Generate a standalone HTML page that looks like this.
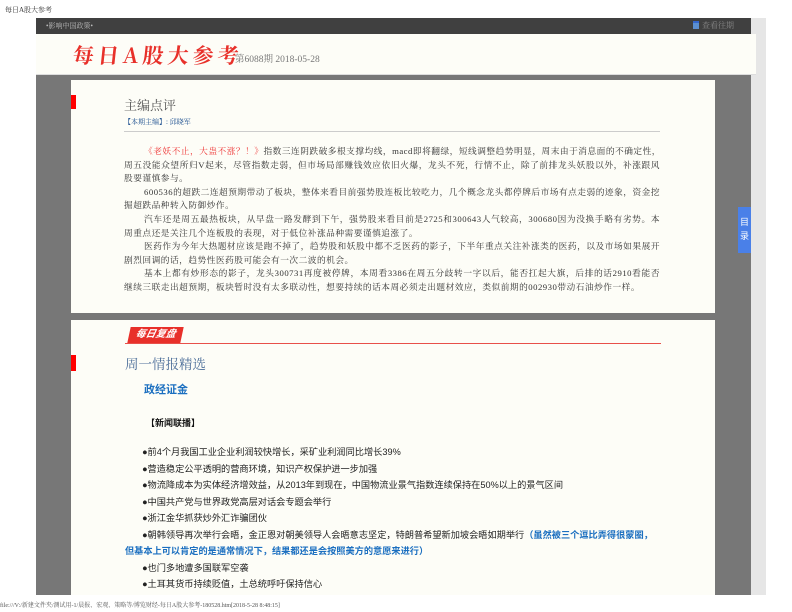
<!DOCTYPE html>
<html><head><meta charset="utf-8"><style>
*{margin:0;padding:0;box-sizing:border-box}
body{width:792px;height:612px;background:#fff;position:relative;overflow:hidden;font-family:"Liberation Serif","Noto Serif CJK SC",serif;}
.abs{position:absolute}
.sans{font-family:"Liberation Sans","Noto Sans CJK SC",sans-serif}
.l{font-size:8.7px;line-height:13.6px;height:13.6px;color:#333;white-space:nowrap;text-align:justify;text-align-last:justify;letter-spacing:0.5px}
.e{text-align-last:left}
.i{padding-left:20px}
.li{font-size:9.2px;color:#222;height:16.5px;line-height:16.5px;padding-left:12px;white-space:nowrap}
</style></head><body>
<div class="abs" style="left:5px;top:5px;font-size:7px;color:#333">每日A股大参考</div>
<div class="abs" style="left:751px;top:18px;width:15px;height:577px;background:#e6e6e6"></div>
<div class="abs" style="left:36px;top:18px;width:715px;height:16px;background:#404040"></div>
<div class="abs" style="left:46px;top:21px;font-size:7px;color:#bbb">•影响中国政策•</div>
<div class="abs" style="left:693px;top:21px;width:6px;height:8px;background:#5b8fd0;border-top:2px solid #36c"></div>
<div class="abs" style="left:702px;top:20px;font-size:8px;color:#888">查看往期</div>
<div class="abs" style="left:36px;top:34px;width:720px;height:41px;background:#fdfdf7;border-bottom:1px solid #ddd"></div>
<div class="abs" style="left:73px;top:40px;font-size:21px;color:#e8302a;font-weight:bold;letter-spacing:4px;font-family:'Noto Serif CJK SC',serif;transform:skewX(-6deg)">每日A股大参考</div>
<div class="abs" style="left:235px;top:51px;font-size:9.5px;color:#777">第6088期 2018-05-28</div>
<div class="abs" style="left:36px;top:75px;width:715px;height:520px;background:#777"></div>
<div class="abs" style="left:71px;top:80px;width:644px;height:233px;background:#fdfdf7"></div>
<div class="abs" style="left:71px;top:95px;width:5px;height:14px;background:#f00"></div>
<div class="abs" style="left:124px;top:95px;font-size:13px;color:#555">主编点评</div>
<div class="abs" style="left:124px;top:117px;font-size:7px;color:#1c4f8f">【本期主编】: 邱晓军</div>
<div class="abs" style="left:124px;top:131px;width:536px;height:1px;background:#ccc"></div>
<div class="abs" style="left:124px;top:145px;width:536px">
<div class="l i"><span style="color:#e33">《老妖不止，大蛊不涨？！》</span>指数三连阴跌破多根支撑均线，macd即将翻绿，短线调整趋势明显，周末由于消息面的不确定性，</div>
<div class="l">周五没能众望所归V起来，尽管指数走弱，但市场局部赚钱效应依旧火爆，龙头不死，行情不止，除了前排龙头妖股以外，补涨跟风</div>
<div class="l e">股要谨慎参与。</div>
<div class="l i">600536的超跌二连超预期带动了板块，整体来看目前强势股连板比较吃力，几个概念龙头都停牌后市场有点走弱的迹象，资金挖</div>
<div class="l e">掘超跌品种转入防御炒作。</div>
<div class="l i">汽车还是周五最热板块，从早盘一路发酵到下午，强势股来看目前是2725和300643人气较高，300680因为没换手略有劣势。本</div>
<div class="l e">周重点还是关注几个连板股的表现，对于低位补涨品种需要谨慎追涨了。</div>
<div class="l i">医药作为今年大热题材应该是跑不掉了，趋势股和妖股中都不乏医药的影子，下半年重点关注补涨类的医药，以及市场如果展开</div>
<div class="l e">剧烈回调的话，趋势性医药股可能会有一次二波的机会。</div>
<div class="l i">基本上都有炒形态的影子，龙头300731再度被停牌，本周看3386在周五分歧转一字以后，能否扛起大旗，后排的话2910看能否</div>
<div class="l e">继续三联走出超预期，板块暂时没有太多联动性，想要持续的话本周必须走出题材效应，类似前期的002930带动石油炒作一样。</div>
</div>
<div class="abs" style="left:71px;top:320px;width:644px;height:275px;background:#fdfdf7"></div>
<div class="abs sans" style="left:129px;top:327px;width:53px;height:16px;background:#e8302a;transform:skewX(-12deg);color:#fff;font-size:10px;font-weight:bold;font-style:italic;line-height:16px;text-align:center">每日复盘</div>
<div class="abs" style="left:125px;top:343px;width:536px;height:1px;background:#e8504a"></div>
<div class="abs" style="left:71px;top:355px;width:5px;height:16px;background:#f00"></div>
<div class="abs" style="left:125px;top:353px;font-size:13.5px;color:#4a6c98">周一情报精选</div>
<div class="abs sans" style="left:144px;top:381px;font-size:11px;font-weight:bold;color:#1b6fc0">政经证金</div>
<div class="abs sans" style="left:146px;top:416px;font-size:9px;font-weight:bold;color:#111">【新闻联播】</div>
<div class="abs sans" style="left:130px;top:444px;width:580px">
<div class="li">●前4个月我国工业企业利润较快增长，采矿业利润同比增长39%</div>
<div class="li">●营造稳定公平透明的营商环境，知识产权保护进一步加强</div>
<div class="li">●物流降成本为实体经济增效益，从2013年到现在，中国物流业景气指数连续保持在50%以上的景气区间</div>
<div class="li">●中国共产党与世界政党高层对话会专题会举行</div>
<div class="li">●浙江金华抓获炒外汇诈骗团伙</div>
<div class="li">●朝韩领导再次举行会晤，金正恩对朝美领导人会晤意志坚定，特朗普希望新加坡会晤如期举行<b style="color:#1b6fc0">（虽然被三个逗比弄得很蒙圈，</b></div>
<div class="li" style="margin-left:-17px;color:#1b6fc0;font-weight:bold">但基本上可以肯定的是通常情况下，结果都还是会按照美方的意愿来进行）</div>
<div class="li">●也门多地遭多国联军空袭</div>
<div class="li">●土耳其货币持续贬值，土总统呼吁保持信心</div>
</div>
<div class="abs" style="left:738px;top:207px;width:13px;height:46px;background:#4a80e8;color:#fff;font-size:9px;line-height:14px;text-align:center;padding-top:8px;font-family:'Noto Sans CJK SC',sans-serif">目<br>录</div>
<div class="abs" style="left:0;top:600px;font-size:6px;color:#555;white-space:nowrap">file:///V:/新建文件夹/测试用-1/晨报、宏观、策略等/博览财经-每日A股大参考-180528.htm[2018-5-28 8:48:15]</div>
</body></html>
